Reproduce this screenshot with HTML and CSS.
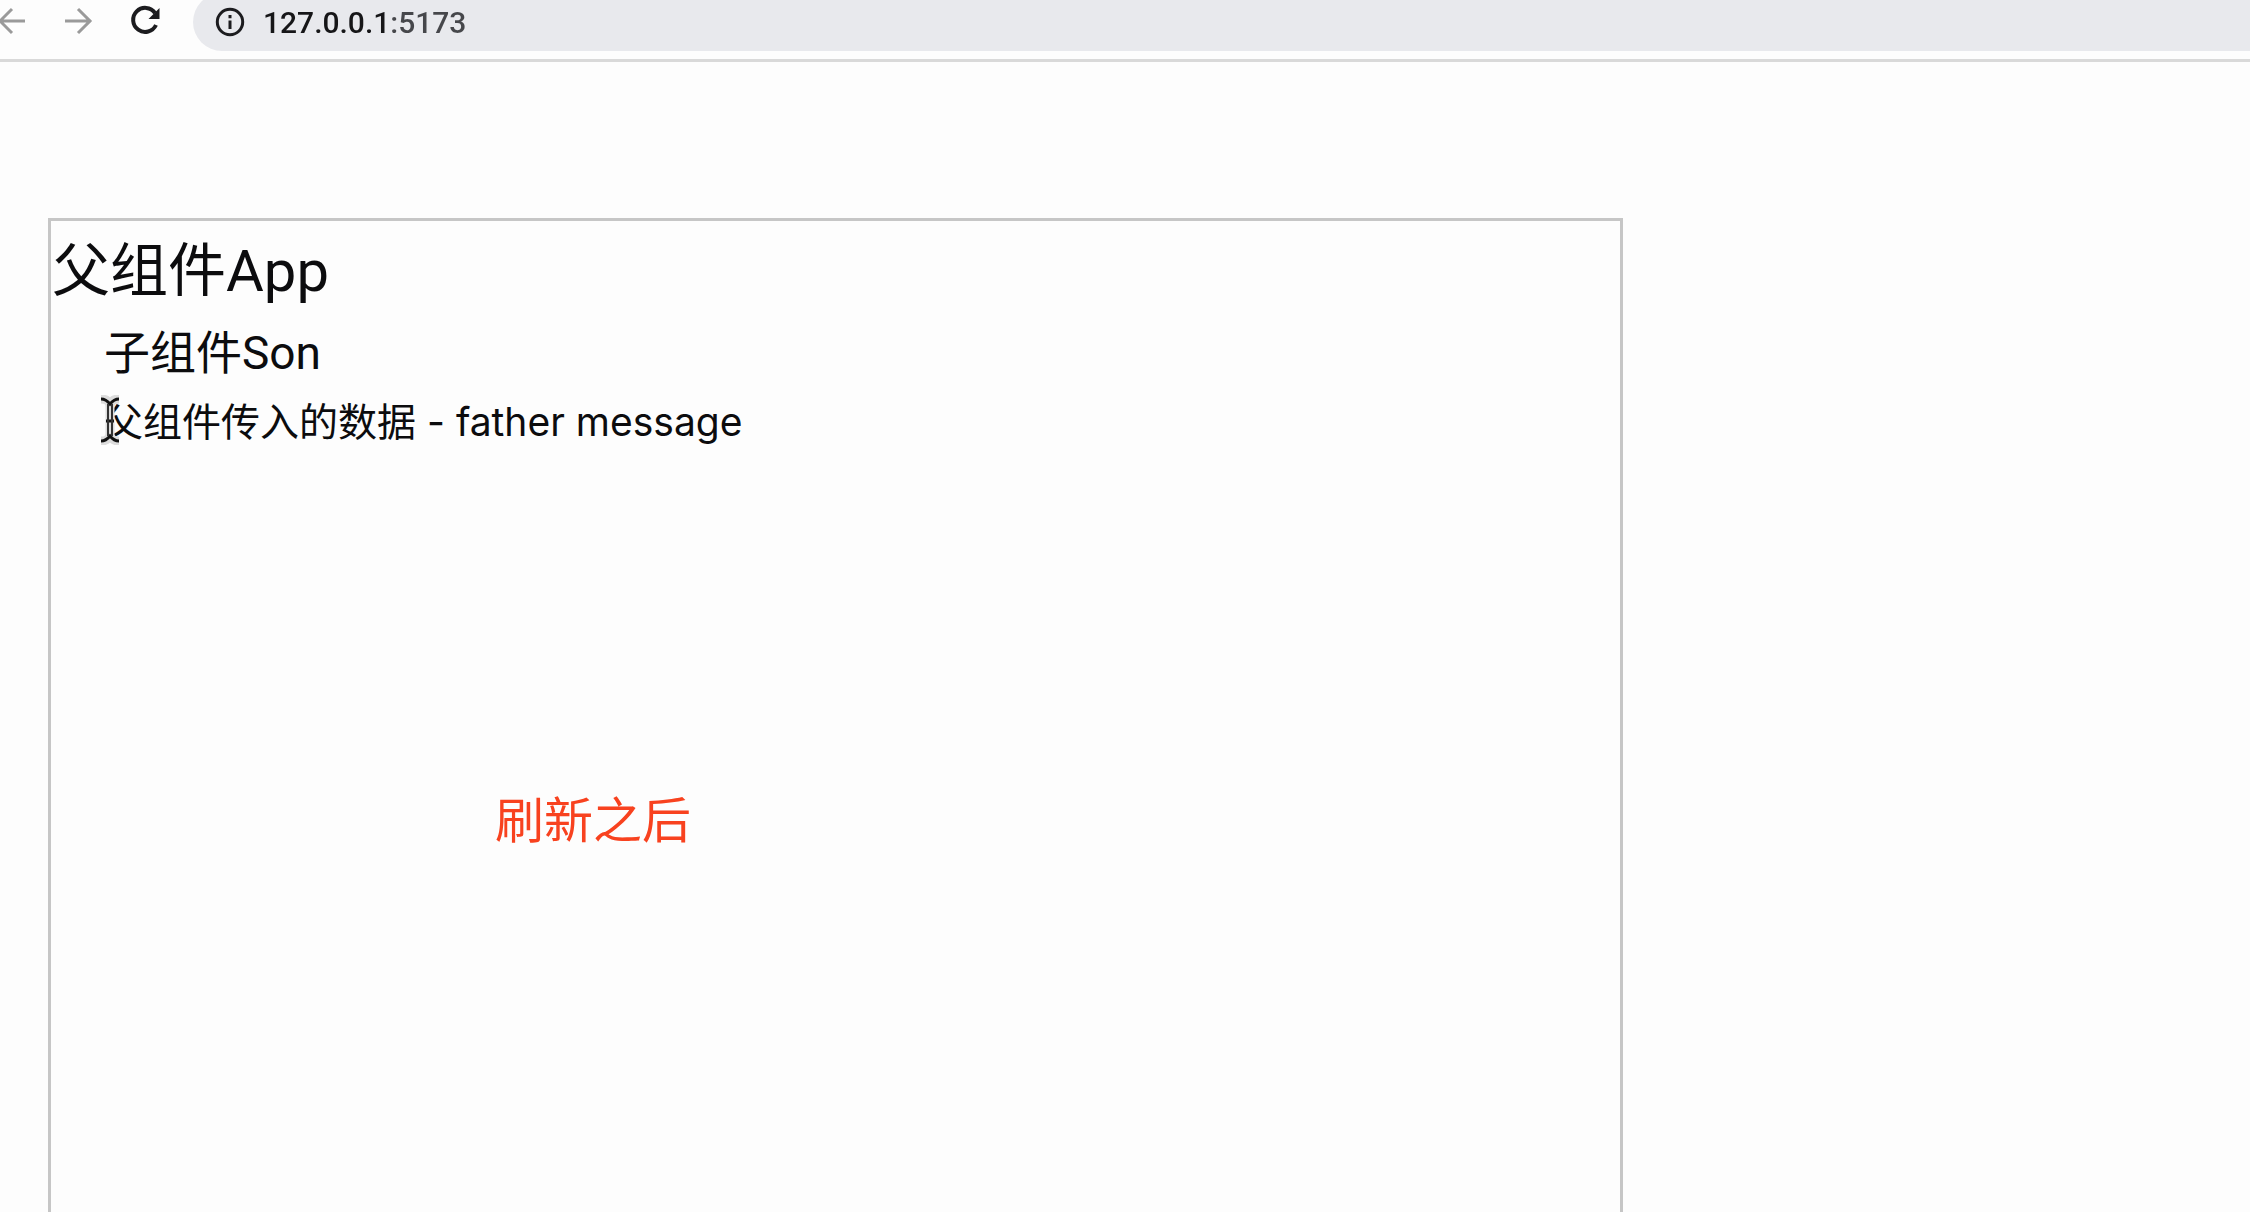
FILE: index.html
```html
<!DOCTYPE html>
<html lang="zh-CN">
<head>
    <meta charset="UTF-8">
    <meta name="viewport" content="width=device-width, initial-scale=1.0">
    <title>127.0.0.1:5173</title>
    <link rel="stylesheet" href="styles.css">
</head>
<body>
    <header class="toolbar">
        <nav class="nav">
            <button class="nav-btn" type="button" aria-label="后退" disabled>
                <svg viewBox="0 0 28 28"><path d="M26 14H2M13 2L1 14L13 26"/></svg>
            </button>
            <button class="nav-btn" type="button" aria-label="前进" disabled>
                <svg viewBox="0 0 28 28"><path d="M0 14H26M13 2L25 14L13 26"/></svg>
            </button>
            <button class="nav-btn reload" type="button" aria-label="刷新">
                <svg viewBox="0 0 28 28">
                    <path d="M24 6A12 12 0 1 0 25 18"/>
                    <path class="solid" d="M28.500 1V12H17.500Z"/>
                </svg>
            </button>
        </nav>
        <label class="address">
            <svg class="info" viewBox="0 0 30 30">
                <circle cx="15" cy="15" r="12.700"/>
                <path d="M15 13.500V22M15 8V11.200"/>
            </svg>
            <input class="url" type="text" value="127.0.0.1:5173" aria-label="地址栏">
        </label>
    </header>

    <main class="page">
        <div class="app">
            <h1>父组件App</h1>
            <div class="son">
                <h2>子组件Son</h2>
                <p>父组件传入的数据 - father message</p>
                <!-- 文本光标 -->
                <svg class="cursor" viewBox="0 0 28 50">
                    <path class="halo" d="M5 4Q14 4 14 12V38Q14 46 5 46M23 4Q14 4 14 12M14 38Q14 46 23 46"/>
                    <path class="edge" d="M5 4Q10 4 14 9Q18 4 23 4M5 46Q10 46 14 41Q18 46 23 46M10 26H18"/>
                    <path class="stem" d="M12 9V41M16 9V41"/>
                </svg>
            </div>
            <p class="note">刷新之后</p>
        </div>
    </main>
</body>
</html>
```

FILE: styles.css
```css
* {
    box-sizing: border-box;
}

body {
    margin: 0;
    min-height: 100vh;
    display: flex;
    flex-direction: column;
    background: #fdfdfd;
    color: #0c0c0e;
    font-family: Inter, "Noto Sans CJK SC", sans-serif;
}

h1, h2, p {
    margin: 0;
    font-weight: 400;
}

h1, h2 {
    font-family: Roboto, "Noto Sans CJK SC", sans-serif;
}

/* 浏览器工具栏 */
.toolbar {
    display: flex;
    align-items: flex-start;
    height: 62px;
    overflow: hidden;
    border-bottom: 3px solid #d9d9d9;
}

.nav {
    display: flex;
    gap: 38px;
    width: 194px;
    padding-top: 7px;
    margin-left: -1px;
}

.nav-btn {
    width: 28px;
    height: 28px;
    padding: 0;
    border: none;
    background: none;
}

.nav-btn svg {
    display: block;
    width: 28px;
    height: 28px;
    overflow: visible;
    fill: none;
    stroke: #9a9a9a;
    stroke-width: 3;
}

.nav-btn.reload svg {
    stroke: #1c1c1f;
    stroke-width: 4;
}

.nav-btn .solid {
    fill: #1c1c1f;
    stroke: none;
}

.address {
    flex: 1;
    display: flex;
    align-items: center;
    gap: 18px;
    height: 58px;
    margin-top: -7px;
    padding-left: 22px;
    border-radius: 29px 0 0 29px;
    background: #e8e9ed;
}

.info {
    width: 30px;
    height: 30px;
    fill: none;
    stroke: #1c1c1f;
    stroke-width: 3;
}

/* 端口号颜色比主机浅 */
.url {
    flex: 1;
    padding: 0;
    border: none;
    outline: none;
    background: linear-gradient(90deg, #161618 126px, #46474b 126px);
    background-clip: text;
    color: transparent;
    font: 500 30px Roboto, sans-serif;
}

/* 页面内容 */
.page {
    flex: 1;
    display: flex;
    padding: 156px 48px 0;
}

.app {
    position: relative;
    width: 70vw;
    padding: 10px 1px 0;
    border: 3px solid #c6c6c6;
    border-bottom: none;
}

h1 {
    font-size: 58px;
    line-height: 80px;
}

.son {
    position: relative;
    margin-left: 52px;
}

h2 {
    font-size: 46px;
    line-height: 84px;
}

.son p {
    font-size: 39px;
    line-height: 54px;
}

.cursor {
    position: absolute;
    left: -8px;
    bottom: 4px;
    width: 28px;
    height: 50px;
    fill: none;
}

.halo {
    stroke: #dcdcdc;
    stroke-width: 9;
}

.edge {
    stroke: #111;
    stroke-width: 3;
}

.stem {
    stroke: #333;
    stroke-width: 2;
}

.note {
    position: absolute;
    left: 444px;
    top: 564px;
    color: #f8421f;
    font-size: 49px;
    line-height: 72px;
}
```
